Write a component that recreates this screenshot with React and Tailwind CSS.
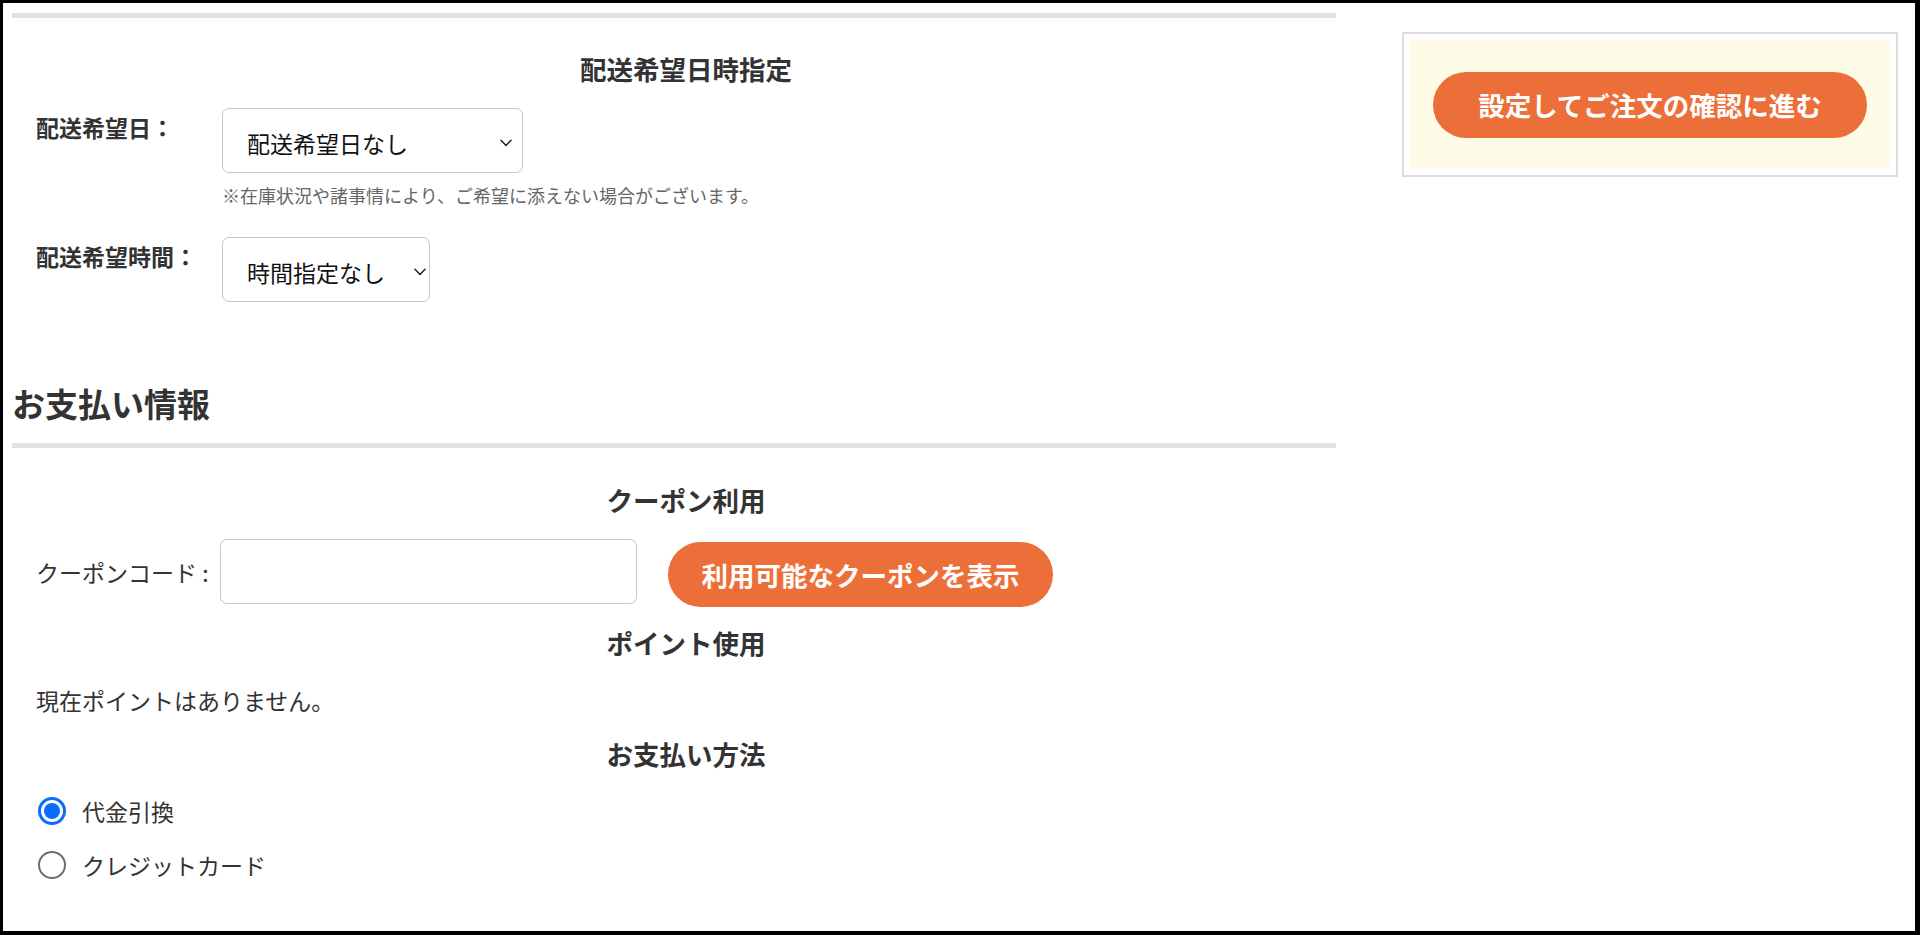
import React from "react";

function Chevron() {
  return (
    <svg width="12" height="8" viewBox="0 0 12 8" fill="none" className="shrink-0">
      <path d="M1 1.2 L6 6.4 L11 1.2" stroke="#222" strokeWidth="1.5" strokeLinecap="round" strokeLinejoin="round" />
    </svg>
  );
}

function Radio({ checked, label }) {
  return (
    <div className="flex items-center h-[34px]">
      <div className="w-[29px] flex justify-center ml-[1px]">
        {checked ? (
          <span className="w-[28px] h-[28px] rounded-full border-[3px] border-[#0b6cff] bg-white flex items-center justify-center">
            <span className="w-[16px] h-[16px] rounded-full bg-[#0b6cff]" />
          </span>
        ) : (
          <span className="w-[28px] h-[28px] rounded-full border-[2px] border-[#6e6e6e] bg-white" />
        )}
      </div>
      <span className="ml-[16px] text-[23px] leading-[34px] text-[#333]">{label}</span>
    </div>
  );
}

export default function App() {
  return (
    <div className="w-[1920px] h-[935px] overflow-hidden bg-white border-solid border-black border-t-[3px] border-l-[3px] border-r-[5px] border-b-[4px] font-['Noto_Sans_CJK_JP',sans-serif] text-[#333]">
      <div className="flex">
        {/* Left column */}
        <div className="ml-[9px] w-[1324px] pt-[10px]">
          <div className="h-[5px] bg-[#dfe1e6]" />

          <div className="pl-[24px]">
            <h3 className="mt-[33px] text-center text-[26.5px] leading-[36px] font-bold text-[#333]">配送希望日時指定</h3>

            <div className="mt-[21px] flex">
              <div className="w-[186px] pt-[2px] text-[23px] leading-[34px] font-bold text-[#333]">配送希望日：</div>
              <div>
                <div className="w-[301px] h-[65px] rounded-[7px] border border-[#c6c6c6] bg-white flex items-center justify-between pl-[24px] pr-[10px] pt-[4px]">
                  <span className="text-[23px] leading-[34px] text-[#111]">配送希望日なし</span>
                  <Chevron />
                </div>
                <p className="mt-[9px] text-[18px] leading-[26px] text-[#666]">※在庫状況や諸事情により、ご希望に添えない場合がございます。</p>
              </div>
            </div>

            <div className="mt-[29px] flex">
              <div className="w-[186px] pt-[2px] text-[23px] leading-[34px] font-bold text-[#333]">配送希望時間：</div>
              <div className="w-[208px] h-[65px] rounded-[7px] border border-[#c6c6c6] bg-white flex items-center justify-between pl-[24px] pr-[3px] pt-[4px]">
                <span className="text-[23px] leading-[34px] text-[#111]">時間指定なし</span>
                <Chevron />
              </div>
            </div>
          </div>

          <h2 className="mt-[79px] text-[33px] leading-[44px] font-bold text-[#333]">お支払い情報</h2>
          <div className="mt-[18px] h-[5px] bg-[#dfe1e6]" />

          <div className="pl-[24px]">
            <h3 className="mt-[34px] text-center text-[26.5px] leading-[36px] font-bold text-[#333]">クーポン利用</h3>

            <div className="mt-[21px] flex items-start">
              <div className="w-[184px] h-[65px] flex items-center text-[23px] leading-[34px] text-[#333]">クーポンコード :</div>
              <input
                type="text"
                className="w-[417px] h-[65px] rounded-[7px] border border-[#c6c6c6] bg-white outline-none px-[12px] text-[23px]"
              />
              <button className="ml-[31px] mt-[3px] w-[385px] h-[65px] rounded-full bg-[#ec6e39] text-white text-[26.5px] leading-[36px] font-bold">
                利用可能なクーポンを表示
              </button>
            </div>

            <h3 className="mt-[18px] text-center text-[26.5px] leading-[36px] font-bold text-[#333]">ポイント使用</h3>
            <p className="mt-[22px] text-[23px] leading-[34px] text-[#333]">現在ポイントはありません。</p>

            <h3 className="mt-[19px] text-center text-[26.5px] leading-[36px] font-bold text-[#333]">お支払い方法</h3>

            <div className="mt-[22px]">
              <Radio checked label="代金引換" />
            </div>
            <div className="mt-[20px]">
              <Radio label="クレジットカード" />
            </div>
          </div>
        </div>

        {/* Right column */}
        <div className="ml-[66px] mt-[29px] w-[496px]">
          <div className="border-2 border-[#dddddd] p-[6px] bg-white">
            <div className="bg-[#fefce6] px-[23px] pt-[32px] pb-[31px]">
              <button className="w-full h-[66px] rounded-full bg-[#ec6e39] text-white text-[26.5px] leading-[36px] font-bold">
                設定してご注文の確認に進む
              </button>
            </div>
          </div>
        </div>
      </div>
    </div>
  );
}
